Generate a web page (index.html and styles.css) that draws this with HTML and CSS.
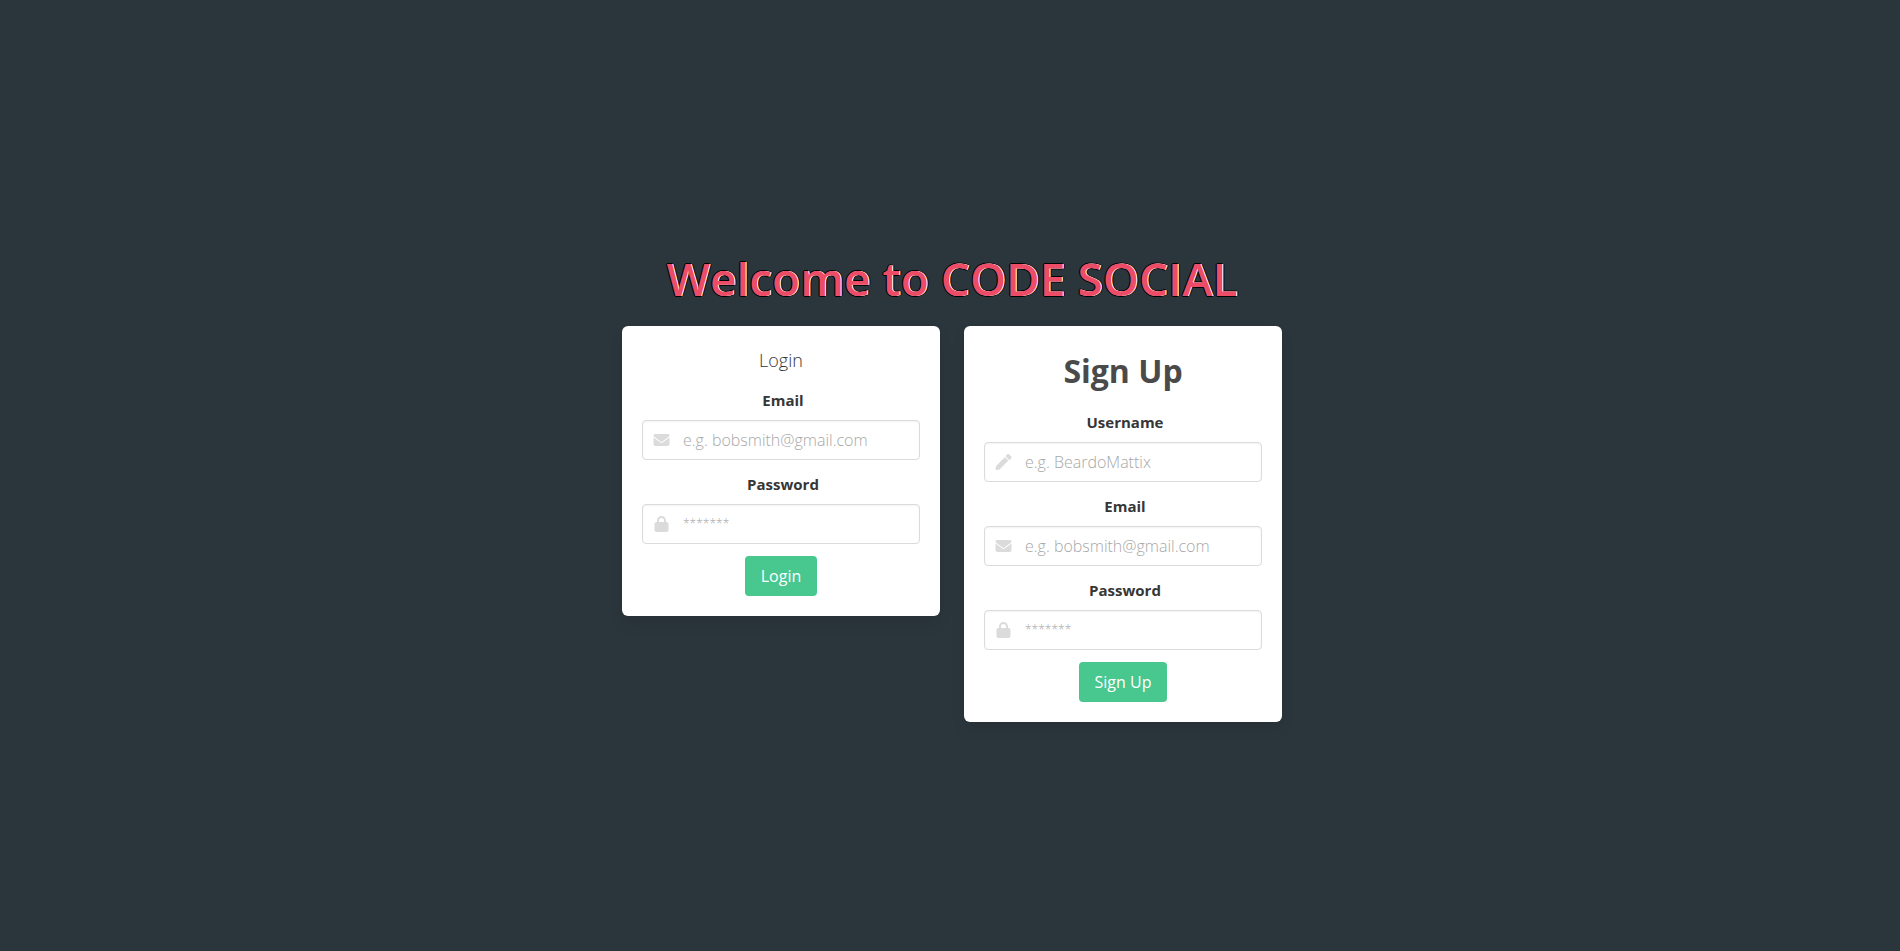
FILE: index.html
```html
<!DOCTYPE html>
<html lang="en">
<head>
<meta charset="utf-8">
<title>Code Social</title>
<link rel="stylesheet" href="styles.css">
</head>
<body>
<svg class="sprite" aria-hidden="true">
  <symbol id="envelope" viewBox="0 0 512 512"><path d="M48 64C21.500 64 0 85.500 0 112c0 15.100 7.100 29.300 19.200 38.400L236.800 313.600c11.400 8.500 27 8.500 38.400 0L492.800 150.400c12.100-9.100 19.200-23.300 19.200-38.400c0-26.500-21.500-48-48-48H48zM0 176V384c0 35.300 28.700 64 64 64H448c35.300 0 64-28.700 64-64V176L294.400 339.200c-22.800 17.100-54 17.100-76.800 0L0 176z"/></symbol>
  <symbol id="lock" viewBox="0 0 448 512"><path d="M144 144v48H304V144c0-44.200-35.800-80-80-80s-80 35.800-80 80zM80 192V144C80 64.500 144.500 0 224 0s144 64.500 144 144v48h16c35.300 0 64 28.700 64 64V448c0 35.300-28.700 64-64 64H64c-35.300 0-64-28.700-64-64V256c0-35.300 28.700-64 64-64H80z"/></symbol>
  <symbol id="pencil" viewBox="0 0 512 512"><path d="M498 142l-46.600 46.600c-4.700 4.700-12.300 4.700-17 0L323.500 77.700c-4.700-4.700-4.700-12.300 0-17L370.100 14.100c18.700-18.700 49.100-18.700 67.900 0L498 74.100c18.700 18.700 18.700 49.100 0 67.900zM300 101L18.200 383 .3 485.500c-2.500 14.500 9.500 26.500 24 24L129 493.800l282-282z"/></symbol>
</svg>
<main class="hero">
  <div class="hero-body">
    <h1 class="title">Welcome to CODE SOCIAL</h1>
    <div class="columns">
      <form class="box">
        <p class="subtitle">Login</p>
        <div class="field">
          <label class="label" for="login-email">Email</label>
          <div class="control">
            <input class="input" id="login-email" type="email" placeholder="e.g. bobsmith@gmail.com">
            <svg class="icon"><use href="#envelope"/></svg>
          </div>
        </div>
        <div class="field">
          <label class="label" for="login-password">Password</label>
          <div class="control">
            <input class="input" id="login-password" type="password" placeholder="*******">
            <svg class="icon"><use href="#lock"/></svg>
          </div>
        </div>
        <button class="button" type="button">Login</button>
      </form>
      <form class="box">
        <h2 class="heading">Sign Up</h2>
        <div class="field">
          <label class="label" for="signup-username">Username</label>
          <div class="control">
            <input class="input" id="signup-username" type="text" placeholder="e.g. BeardoMattix">
            <svg class="icon"><use href="#pencil"/></svg>
          </div>
        </div>
        <div class="field">
          <label class="label" for="signup-email">Email</label>
          <div class="control">
            <input class="input" id="signup-email" type="email" placeholder="e.g. bobsmith@gmail.com">
            <svg class="icon"><use href="#envelope"/></svg>
          </div>
        </div>
        <div class="field">
          <label class="label" for="signup-password">Password</label>
          <div class="control">
            <input class="input" id="signup-password" type="password" placeholder="*******">
            <svg class="icon"><use href="#lock"/></svg>
          </div>
        </div>
        <button class="button" type="button">Sign Up</button>
      </form>
    </div>
  </div>
</main>
</body>
</html>
```
FILE: styles.css
```css
* { box-sizing: border-box; margin: 0; }
body {
  background: #2b363c;
  color: #4a4a4a;
  font: 16px/24px "Segoe UI", "Open Sans", "Noto Sans", sans-serif;
}
.sprite { display: none; }
.hero {
  min-height: 100vh;
  display: flex;
  align-items: center;
  justify-content: center;
  padding-left: 4px;
}
.hero-body { width: 100%; max-width: 660px; text-align: center; padding-top: 20px; }
.title {
  color: #ed4c67;
  font-size: 46px;
  line-height: 56px;
  font-weight: 600;
  margin-bottom: 20px;
  white-space: nowrap;
  text-shadow: 1px 0 #fff, -1px 0 #000, 0 1px #000, 0 -1px #000, 2px 0 #000;
}
.columns { display: flex; align-items: flex-start; gap: 24px; }
.box {
  flex: 1;
  min-width: 0;
  padding: 20px;
  background: #fff;
  border-radius: 6px;
  box-shadow: 0 8px 16px -2px rgba(10, 10, 10, .1), 0 0 0 1px rgba(10, 10, 10, .02);
}
.subtitle { color: #363636; font-size: 18px; line-height: 28px; margin-bottom: 14px; font-weight: 300; }
.heading { font-size: 32px; line-height: 50px; font-weight: 700; margin-bottom: 14px; }
.field { margin-bottom: 12px; }
.label {
  display: block;
  padding-left: 4px;
  color: #363636;
  font-size: 15px;
  font-weight: 700;
  margin-bottom: 8px;
}
.control { position: relative; }
.input {
  display: block;
  width: 100%;
  height: 40px;
  padding: 0 12px 0 40px;
  border: 1px solid #dbdbdb;
  border-radius: 4px;
  background: #fff;
  box-shadow: inset 0 1px 2px rgba(10, 10, 10, .05);
  color: #363636;
  font: inherit;
  font-size: 16px;
}
.input::placeholder { color: #a8a8a8; opacity: 1; font-weight: 300; }
.input[type="password"] { font-size: 12px; }
.icon {
  position: absolute;
  left: 11px;
  top: 12px;
  width: 17px;
  height: 16px;
  fill: #dbdbdb;
  pointer-events: none;
}
.button {
  height: 40px;
  padding: 0 16px;
  border: 0;
  border-radius: 4px;
  background: #48c78e;
  color: #fff;
  font: inherit;
  font-size: 16px;
  display: block;
  margin: 0 auto;
}
```
